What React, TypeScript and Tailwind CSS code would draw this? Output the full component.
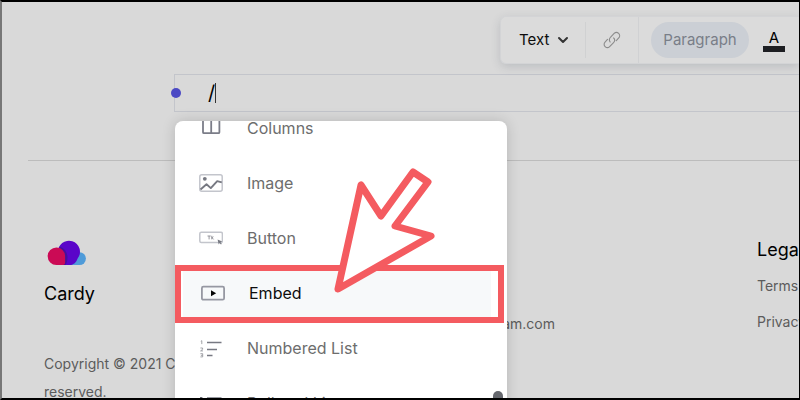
import type { ReactNode } from 'react';
import { ChevronDown } from 'lucide-react';

interface Block {
  name: string;
  icon: ReactNode;
  active?: boolean;
}

const ColumnsIcon = () => (
  <svg className="w-6 h-5" viewBox="0 0 24 20" fill="none" stroke="#7b7d88" strokeWidth="1.8">
    <rect x="4" y="2" width="16.4" height="13.2" rx="1" />
    <path d="M12.200 2v13.200" />
  </svg>
);

const ImageIcon = () => (
  <svg className="w-6 h-5" viewBox="0 0 24 20" fill="none">
    <rect x="0.8" y="1.800" width="22.4" height="16.4" rx="2" stroke="#c3c5cc" strokeWidth="1.5" />
    <circle cx="5.8" cy="5.8" r="1.9" fill="#777982" />
    <path d="M1.500 16.500l6-5.200 4.300 3.800 6.400-7 4.600 1.200" stroke="#777982" strokeWidth="1.9" strokeLinejoin="round" />
  </svg>
);

const ButtonIcon = () => (
  <svg className="w-6 h-5" viewBox="0 0 24 20" fill="none">
    <rect x="0.8" y="4.2" width="22.600" height="10.2" rx="1.5" stroke="#c3c5cc" strokeWidth="1.5" />
    <path d="M8.5 8h3.2M10.1 8v3.4M12.8 7.8v3.6M12.8 9.9l1.6-1.2M13 9.700l1.6 1.7" stroke="#8a8b92" strokeWidth="0.9" />
    <path d="M18.6 11.6l4.6 1.8-1.8.8 1.4 1.6-.8.8-1.5-1.6-.8 1.5z" fill="#777982" />
  </svg>
);

const EmbedIcon = () => (
  <svg className="w-6 h-5" viewBox="0 0 24 20" fill="none">
    <rect x="0.9" y="3.7" width="22.2" height="13" rx="1.5" stroke="#9698a2" strokeWidth="1.8" />
    <path d="M10 7.300v6l5.200-3z" fill="#050505" />
  </svg>
);

const NumberedIcon = () => (
  <svg className="w-6 h-5" viewBox="0 0 24 20" fill="none">
    <path d="M8 4.500h14.500M8 11.500h10M8 17.500h5.500" stroke="#777982" strokeWidth="1.4" />
    <path
      d="M1.8 3.3l1-.6v3.4M1.4 10h2.2v1.3l-2 1.6h2.4M1.4 15.7h2.3v3.2h-2.3M1.9 17.3h1.8"
      stroke="#97989e"
      strokeWidth="0.9"
    />
  </svg>
);

const BulletedIcon = () => (
  <svg className="w-6 h-5" viewBox="0 0 24 20" fill="none">
    <path d="M8 5h14.500M8 11.500h10M8 17.500h5.500" stroke="#777982" strokeWidth="1.4" />
    <path d="M1 5h2.400M1 11.500h2.400M1 17.500h2.400" stroke="#666870" strokeWidth="2" />
  </svg>
);

const LinkIcon = () => (
  <svg className="w-[18px] h-[18px]" viewBox="0 0 16 16" fill="none" stroke="#8c8c8c" strokeWidth="1" strokeLinecap="round">
    <path d="M6.4 9.800a2.900 2.900 0 0 1 .2-4.100l3.300-3.500a2.800 2.800 0 0 1 4.100 3.900l-2.200 2.400" />
    <path d="M9.400 6.200a2.900 2.900 0 0 1 0 4.100l-3.500 3.500a2.800 2.800 0 0 1-4.100-3.900L4 7.500" />
  </svg>
);

const CloudLogo = () => (
  <svg className="w-12 h-[26px]" viewBox="0 0 48 26">
    <circle cx="35.5" cy="18.6" r="6.4" fill="#4f9bd9" />
    <path d="M20 20h15.500v5H20z" fill="#4f9bd9" />
    <path d="M14 12.500a11 11 0 1 1 19.500 6.200c-1.500 4-4.200 6.300-8 6.300H14z" fill="#5a05c9" />
    <path d="M15.500 6.500a11.500 11.500 0 0 1 8 10.800c0 3-.6 5.700-2 7.700H15z" fill="#46109b" />
    <path d="M12.400 7.500a8.700 8.700 0 0 1 8.700 8.500v6.500c0 1.500-.7 2.500-2 2.500h-6.700a8.750 8.750 0 0 1 0-17.500z" fill="#cb0a55" />
  </svg>
);

const blocks: Block[] = [
  { name: 'Columns', icon: <ColumnsIcon /> },
  { name: 'Image', icon: <ImageIcon /> },
  { name: 'Button', icon: <ButtonIcon /> },
  { name: 'Embed', icon: <EmbedIcon />, active: true },
  { name: 'Numbered List', icon: <NumberedIcon /> },
  { name: 'Bulleted List', icon: <BulletedIcon /> },
];

function Toolbar() {
  return (
    <div className="absolute left-[498px] right-0 top-[14px] z-10 flex h-12 items-center rounded-l-md border border-r-0 border-[#d3d4d6] bg-[#dbdbdb] text-[15px] shadow-[0_3px_10px_rgba(60,70,90,0.18)]">
      <button className="flex h-9 w-[85px] shrink-0 items-center gap-1.5 border-r border-[#d0d1d2] pl-[18px] text-[#0c0c0c]">
        Text
        <ChevronDown className="h-4 w-4 text-[#333]" strokeWidth={3} />
      </button>
      <button aria-label="Link" className="flex h-full w-[53px] shrink-0 items-center justify-center border-r border-[#d0d1d3]">
        <LinkIcon />
      </button>
      <button className="ml-3 h-9 w-[98px] shrink-0 rounded-full bg-[#cbcfd5] text-[#797e88]">
        Paragraph
      </button>
      <button aria-label="Text color" className="ml-[14px] mt-0.5 flex w-[22px] shrink-0 flex-col items-center leading-4 text-black">
        A
        <span className="h-[6px] w-full bg-[#1d1e22]" />
      </button>
    </div>
  );
}

function BlockMenu() {
  return (
    <div className="absolute left-0 top-[46px] z-20 h-[300px] w-[332px] overflow-hidden rounded-t-lg bg-white shadow-[0_0_14px_rgba(0,0,0,0.16)]">
      <ul className="-mt-[21px]">
        {blocks.map(({ name, icon, active }) => (
          <li key={name} className="relative h-[55px]">
            {active && <span className="absolute inset-y-0 left-2 right-4 bg-[#f7f9fa]" />}
            <button
              className={`relative flex h-full w-full items-center gap-6 text-left text-base ${
                active ? 'pl-[26px] text-[#0d0d0d]' : 'pl-6 text-[#6d6d6d]'
              }`}
            >
              {icon}
              {name}
            </button>
            {active && (
              <span className="absolute -bottom-[3px] top-0 left-0 right-[3px] border-[6px] border-[#f45b60]" />
            )}
          </li>
        ))}
      </ul>
      <span className="absolute right-1 top-[270px] h-5 w-[10px] rounded-full bg-[#66686e]" />
      <svg
        className="absolute left-[155px] top-[44px] h-[130px] w-[110px]"
        viewBox="0 0 110 130"
        fill="#fff"
        stroke="#f45b60"
        strokeWidth="7"
        strokeLinejoin="round"
      >
        <path d="M31 20L8 124L101 71L65 61L98 17L83 7L51 51z" />
      </svg>
    </div>
  );
}

function Editor() {
  return (
    <section className="pl-[172px] pt-[72px]">
      <div className="relative flex h-[38px] items-center border border-r-0 border-[#c3c5cb] pl-[33px]">
        <span className="absolute -left-1 h-[10px] w-[10px] rounded-full bg-[#4b49c4]" />
        <span className="border-r border-[#333] text-xl leading-5 text-black">/</span>
        <BlockMenu />
      </div>
    </section>
  );
}

function Footer() {
  return (
    <footer className="ml-[26px] mt-12 flex border-t border-[#bcbcbc] pl-4 text-sm text-[#5c5c5c]">
      <div className="w-[300px] shrink-0 pt-[79px]">
        <CloudLogo />
        <h2 className="mt-4 text-lg leading-6 text-black">Cardy</h2>
        <p className="mt-11 w-60 leading-7">Copyright © 2021 Cardy. All rights reserved.</p>
      </div>
      <div className="w-[211px] shrink-0 pt-[149px] text-right">
        <a href="mailto:team@gmam.com" className="leading-7">
          team@gmam.com
        </a>
      </div>
      <nav className="ml-[202px] shrink-0 pt-[77px]">
        <h2 className="text-lg leading-6 text-black">Legal</h2>
        <ul className="mt-[6px]">
          <li className="leading-9"><a href="#terms">Terms</a></li>
          <li className="leading-9"><a href="#privacy">Privacy</a></li>
        </ul>
      </nav>
    </footer>
  );
}

export default function App() {
  return (
    <div className="relative h-screen w-full overflow-hidden border-2 border-r border-black border-l-[#777] bg-[#d9d9d9] font-[Inter,sans-serif]">
      <Toolbar />
      <Editor />
      <Footer />
    </div>
  );
}
